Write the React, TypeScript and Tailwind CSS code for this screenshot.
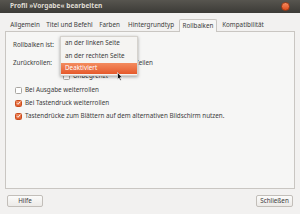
import React from "react";

const tabs: { label: string; w: string; active?: boolean }[] = [
  { label: "Allgemein", w: "w-[36px]" },
  { label: "Titel und Befehl", w: "w-[53px]" },
  { label: "Farben", w: "w-[27px]" },
  { label: "Hintergrundtyp", w: "w-[56px]" },
  { label: "Rollbalken", w: "w-[38px]", active: true },
  { label: "Kompatibilität", w: "w-[52px]" },
];

function Check({ checked }: { checked?: boolean }) {
  return checked ? (
    <div className="w-[7px] h-[7px] rounded-[1.5px] bg-gradient-to-b from-[#f08a5d] to-[#df5a2a] border border-[#c94c1c] flex items-center justify-center">
      <svg width="6" height="6" viewBox="0 0 6 6">
        <path d="M1 3.2 L2.4 4.6 L5 1.4" stroke="#fff" strokeWidth="1.1" fill="none" />
      </svg>
    </div>
  ) : (
    <div className="w-[7px] h-[7px] rounded-[1.5px] bg-white border border-[#a9a6a1]" />
  );
}

export default function App() {
  return (
    <div
      className="w-[300px] h-[214px] bg-[#f2f1f0] flex flex-col overflow-hidden text-[#3c3c3c] text-[6.3px] leading-none"
      style={{ fontFamily: '"Noto Sans", "DejaVu Sans", sans-serif' }}
    >
      {/* title bar */}
      <div className="h-[13px] shrink-0 bg-gradient-to-b from-[#57554f] to-[#3c3b37] flex items-center justify-between pl-[10px] pr-[10px]">
        <span className="text-[#dfdbd2] font-bold text-[6.6px]">Profil »Vorgabe« bearbeiten</span>
        <div className="w-[9px] h-[9px] rounded-full bg-gradient-to-b from-[#f58b5f] to-[#df4a16] border border-[#9b3a17]" />
      </div>

      <div className="flex-1 flex flex-col px-[5px] pt-[6px]">
        {/* tabs */}
        <div className="flex pl-[2px] h-[12px] relative z-10">
          {tabs.map((t) => (
            <div
              key={t.label}
              className={`${t.w} shrink-0 flex items-center justify-center whitespace-nowrap ${
                t.active
                  ? "bg-[#f6f6f5] border border-b-0 border-[#c9c6c2] rounded-t-[2px] h-[13px]"
                  : "h-[12px] pt-[1px]"
              }`}
            >
              {t.label}
            </div>
          ))}
        </div>

        {/* page */}
        <div className="h-[158px] border border-[#c9c6c2] bg-[#f6f6f5] relative flex flex-col pl-[7px] pt-[9px]">
          <div className="h-[8px] flex items-center">Rollbalken ist:</div>
          <div className="h-[10px] mt-[9px] flex items-center">
            <span>Zurückrollen:</span>
            <span className="ml-[83px]">Zeilen</span>
          </div>
          <div className="h-[8px] mt-[4px] flex items-center pl-[50px] gap-[3px]">
            <Check />
            <span>Unbegrenzt</span>
          </div>
          <div className="flex flex-col gap-[5px] mt-[6px] pl-[2px]">
            <div className="h-[8px] flex items-center gap-[3px]">
              <Check />
              <span>Bei Ausgabe weiterrollen</span>
            </div>
            <div className="h-[8px] flex items-center gap-[3px]">
              <Check checked />
              <span>Bei Tastendruck weiterrollen</span>
            </div>
            <div className="h-[8px] flex items-center gap-[3px]">
              <Check checked />
              <span>Tastendrücke zum Blättern auf dem alternativen Bildschirm nutzen.</span>
            </div>
          </div>

          {/* popup menu */}
          <div className="absolute left-[54px] top-[4px] w-[78px] h-[40px] bg-[#f5f4f2] border border-[#d5d2cd] shadow-[0_1px_3px_rgba(0,0,0,0.35)] flex flex-col z-20">
            <div className="h-[13px] shrink-0 flex items-center pl-[4px]">an der linken Seite</div>
            <div className="h-[13px] shrink-0 flex items-center pl-[4px]">an der rechten Seite</div>
            <div className="h-[11px] shrink-0 flex items-center pl-[4px] bg-gradient-to-b from-[#f38b5e] to-[#e5592a] text-white">
              Deaktiviert
            </div>
          </div>
          {/* cursor */}
          <svg className="absolute left-[111px] top-[40px] z-30" width="6" height="9" viewBox="0 0 6 9">
            <path d="M0.5 0.5 L0.5 7.5 L2 6 L3.3 8.6 L4.3 8.1 L3.1 5.6 L5.3 5.6 Z" fill="#111" stroke="#fff" strokeWidth="0.6" />
          </svg>
        </div>

        {/* buttons */}
        <div className="flex justify-between items-center pt-[6px] px-[2px]">
          <div className="w-[36px] h-[12px] border border-[#c2beb9] rounded-[2px] bg-gradient-to-b from-[#fbfbfa] to-[#eceae7] flex items-center justify-center">
            Hilfe
          </div>
          <div className="w-[37px] h-[12px] border border-[#c2beb9] rounded-[2px] bg-gradient-to-b from-[#fbfbfa] to-[#eceae7] flex items-center justify-center">
            Schließen
          </div>
        </div>
      </div>
    </div>
  );
}
